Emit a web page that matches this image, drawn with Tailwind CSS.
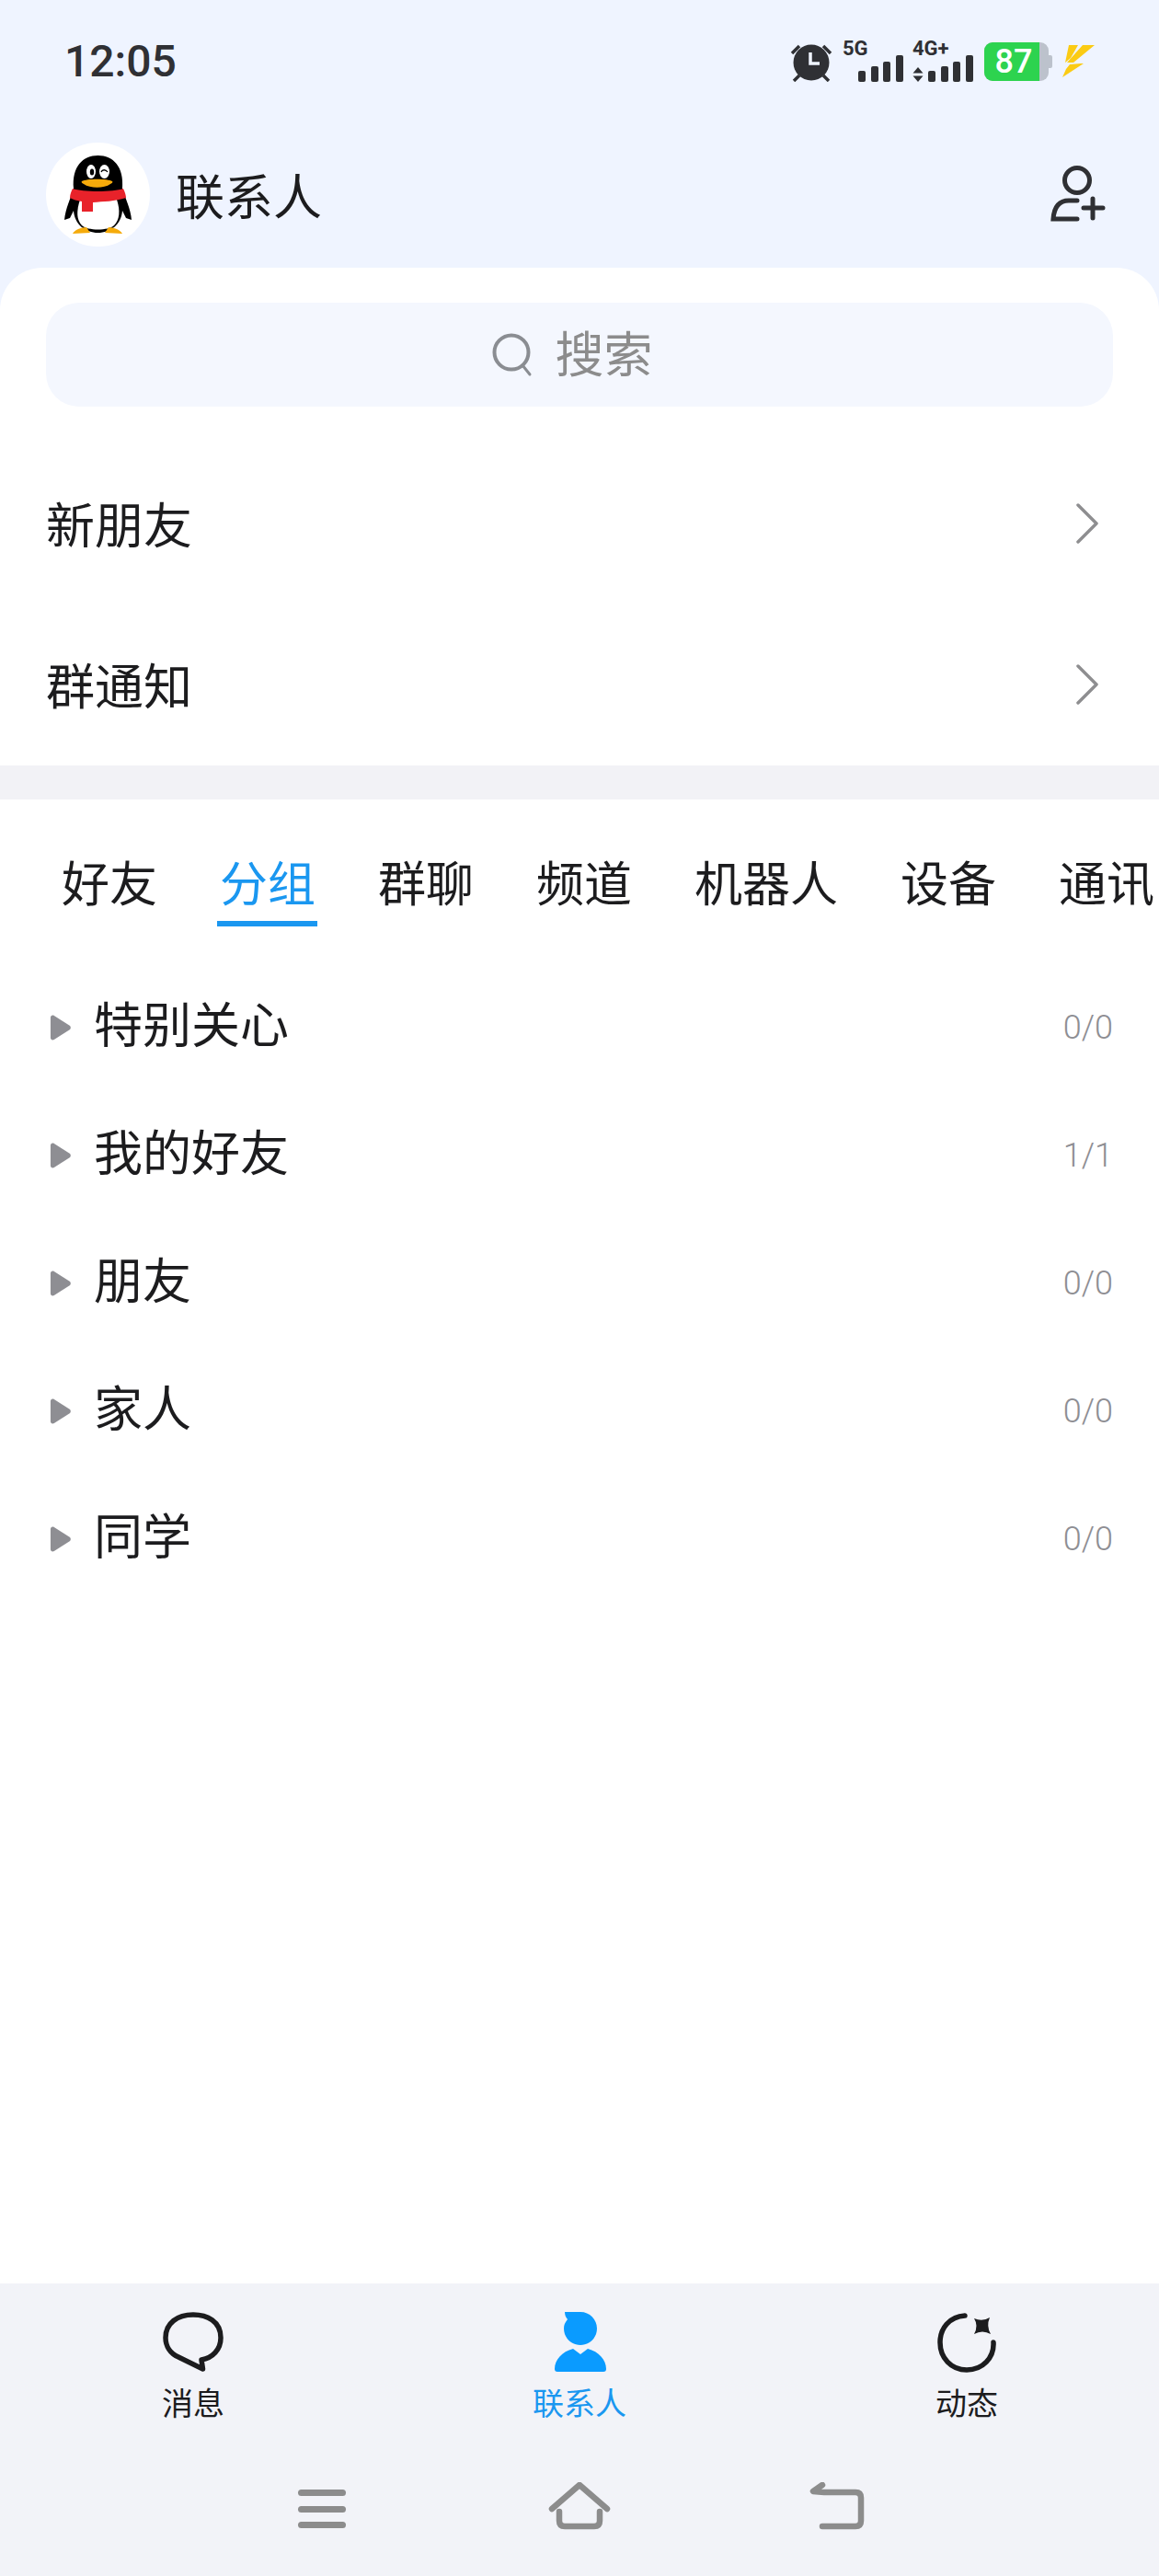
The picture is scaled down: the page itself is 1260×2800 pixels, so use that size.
<!DOCTYPE html>
<html lang="zh-CN">
  <head>
    <meta charset="UTF-8" />
    <meta name="viewport" content="width=device-width, initial-scale=1.0" />
    <title>联系人</title>
    <script src="https://cdn.jsdelivr.net/npm/@tailwindcss/browser@4"></script>
  </head>
  <body class="bg-white">
    <div class="w-[1260px] h-[2800px] overflow-hidden flex flex-col bg-[#eff4ff] text-[#1c1c1e] font-['Roboto','Noto_Sans_CJK_SC',sans-serif]">
      <!-- Status bar -->
      <div class="h-[136px] shrink-0 flex items-center justify-between pl-[70px] pr-[70px] pb-[2px]">
        <span class="text-[48px] leading-none font-medium text-[#2f3034]">12:05</span>
        <div class="flex items-center">
          <svg width="46" height="44" viewBox="0 0 46 44" fill="none">
            <circle cx="23" cy="23" r="19.5" fill="#2f3034" />
            <path d="M22 12v12h10" stroke="#eff4ff" stroke-width="3.5" />
            <path d="M2 13 10 5M44 13 36 5M4 43l6-6M42 43l-6-6" stroke="#2f3034" stroke-width="3.5" />
          </svg>
          <div class="relative w-[64px] h-[44px] ml-[11px]">
            <span class="absolute left-0 top-[-2px] text-[22px] leading-[20px] font-bold text-[#2f3034]">5G</span>
            <div class="absolute left-[17px] bottom-0 flex items-end gap-[5.5px]">
              <i class="block w-[8px] h-[12px] rounded-[2px] bg-[#2f3034]"></i>
              <i class="block w-[8px] h-[17px] rounded-[2px] bg-[#2f3034]"></i>
              <i class="block w-[8px] h-[22px] rounded-[2px] bg-[#2f3034]"></i>
              <i class="block w-[8px] h-[29px] rounded-[2px] bg-[#2f3034]"></i>
            </div>
          </div>
          <div class="relative w-[64px] h-[44px] ml-[12px]">
            <span class="absolute left-0 top-[-2px] text-[22px] leading-[20px] font-bold text-[#2f3034]">4G+</span>
            <svg class="absolute left-0 bottom-0" width="12" height="16" viewBox="0 0 12 16" fill="#2f3034">
              <path d="M6 0l5.500 6.500H.5zM6 16 .5 9.500h11z" />
            </svg>
            <div class="absolute left-[17px] bottom-0 flex items-end gap-[5.5px]">
              <i class="block w-[8px] h-[12px] rounded-[2px] bg-[#2f3034]"></i>
              <i class="block w-[8px] h-[17px] rounded-[2px] bg-[#2f3034]"></i>
              <i class="block w-[8px] h-[22px] rounded-[2px] bg-[#2f3034]"></i>
              <i class="block w-[8px] h-[29px] rounded-[2px] bg-[#2f3034]"></i>
            </div>
          </div>
          <div class="flex items-center ml-[14px]">
            <div class="flex h-[42px] w-[70px] rounded-[9px] overflow-hidden bg-[#bcc2cc]">
              <div class="w-[60px] bg-[#2dd34f] flex items-center justify-center text-white text-[36px] leading-none font-medium pl-[4px]">87</div>
            </div>
            <div class="w-[4px] h-[14px] rounded-r-[2px] bg-[#bcc2cc]"></div>
          </div>
          <svg class="ml-[11px]" width="35" height="36" viewBox="0 0 35 36" fill="#fbcb14">
            <path d="M7 0h10L9 14 3 19zM22 0h13L12 19H5zM20 20h3L0 35 4 26 8 21z" />
          </svg>
        </div>
      </div>

      <!-- Header -->
      <div class="h-[155px] shrink-0 flex items-start justify-between pl-[50px] pr-[58px]">
        <div class="flex items-center">
          <div class="w-[113px] h-[113px] rounded-full bg-white flex items-center justify-center mt-[19px]">
            <svg width="73" height="85" viewBox="0 0 73 85">
              <path d="M10 36C8 12 20 0 36.500 0S65 12 63 36C66 46 72 58 73 70L67 68 63 60C62 75 50 84 36.500 84 23 84 11 75 10 60L6 68 0 70C1 58 7 46 10 36z" fill="#000" />
              <path d="M17 48H57C61 60 60 70 54 76 48 82 25 82 19 76 13 70 13 60 17 48z" fill="#fff" />
              <ellipse cx="29" cy="17.500" rx="5" ry="7.500" fill="#fff" />
              <ellipse cx="43.500" cy="17.500" rx="5.500" ry="7.500" fill="#fff" />
              <ellipse cx="30" cy="18" rx="2.200" ry="3.500" fill="#000" />
              <path d="M40 18c1-3 5-3 7 0" stroke="#000" stroke-width="1.300" fill="none" />
              <path d="M19 28c5-3 28-3 33 0 1 1 0 2-2 3-7 5-22 5-29 0-2-1-3-2-2-3z" fill="#f5ab0b" />
              <path d="M9 36C20 40 53 40 64 36 66 40 67 44 67 46 55 50 42 50 31 51V61H19V50C14 49 9 48 6 46 6 42 8 38 9 36z" fill="#e8222a" />
              <path d="M9 85C11 81 18 78 24 78L28 84zM63 85C61 81 54 78 48 78L44 84z" fill="#f5ab0b" />
            </svg>
          </div>
          <span class="ml-[28px] mt-[29px] text-[53px] leading-none">联系人</span>
        </div>
        <svg class="mt-[44px]" width="60" height="64" viewBox="0 0 60 64" fill="none" stroke="#2f3034" stroke-width="5" stroke-linecap="round">
          <circle cx="29" cy="16" r="13.500" />
          <path d="M29 38H20C10 38 4 44 3 58H29" />
          <path d="M36 46H57M46 36V57" />
        </svg>
      </div>

      <!-- Main panel -->
      <div class="flex-1 min-h-0 bg-white rounded-t-[46px] flex flex-col">
        <div class="mx-[50px] mt-[38px] h-[113px] shrink-0 rounded-[36px] bg-[#f4f7fe] flex items-center justify-center pr-[16px]">
          <svg width="46" height="48" viewBox="0 0 46 48" fill="none" stroke="#8a8d92" stroke-linecap="round">
            <circle cx="21" cy="21" r="18.500" stroke-width="4" />
            <path d="M33 35l8 10" stroke-width="3" />
          </svg>
          <span class="ml-[23px] mt-[3px] text-[53px] leading-none text-[#8c8c8c]">搜索</span>
        </div>

        <!-- Shortcuts -->
        <div class="h-[175px] mt-[40px] shrink-0 flex items-center justify-between pl-[50px] pr-[66px]">
          <span class="mt-[7px] text-[53px] leading-none">新朋友</span>
          <svg class="mb-[2px]" width="24" height="44" viewBox="0 0 24 44" fill="none" stroke="#8e8e90" stroke-width="3.500" stroke-linecap="round" stroke-linejoin="round">
            <path d="M2 2l20 20L2 42" />
          </svg>
        </div>
        <div class="h-[175px] shrink-0 flex items-center justify-between pl-[50px] pr-[66px]">
          <span class="mt-[7px] text-[53px] leading-none">群通知</span>
          <svg class="mb-[2px]" width="24" height="44" viewBox="0 0 24 44" fill="none" stroke="#8e8e90" stroke-width="3.500" stroke-linecap="round" stroke-linejoin="round">
            <path d="M2 2l20 20L2 42" />
          </svg>
        </div>
        <div class="h-[37px] shrink-0 bg-[#f2f2f6]"></div>

        <!-- Tabs -->
        <div class="flex gap-[68px] pl-[67px] mt-[64px] pb-[14px] shrink-0 whitespace-nowrap text-[52px] leading-[60px]">
          <span>好友</span>
          <span class="relative text-[#1a97f0]">分组<i class="absolute left-[-3px] right-[-2px] top-[68px] h-[6px] bg-[#1a97f0]"></i></span>
          <span>群聊</span>
          <span>频道</span>
          <span>机器人</span>
          <span>设备</span>
          <span>通讯</span>
        </div>

        <!-- Groups -->
        <div class="mt-[40px] flex flex-col">
          <div class="h-[139px] flex items-center pl-[54px] pr-[50px]">
            <svg width="24" height="28" viewBox="0 0 25 28" preserveAspectRatio="none" fill="#8e8e93"><path d="M1 3c0-2 2-3 4-2l18 11c1 1 1 3 0 4L5 27c-2 1-4 0-4-2z" /></svg>
            <span class="ml-[24px] text-[53px] leading-none">特别关心</span>
            <span class="ml-auto text-[36px] leading-none font-light text-[#8e8e93]">0/0</span>
          </div>
          <div class="h-[139px] flex items-center pl-[54px] pr-[50px]">
            <svg width="24" height="28" viewBox="0 0 25 28" preserveAspectRatio="none" fill="#8e8e93"><path d="M1 3c0-2 2-3 4-2l18 11c1 1 1 3 0 4L5 27c-2 1-4 0-4-2z" /></svg>
            <span class="ml-[24px] text-[53px] leading-none">我的好友</span>
            <span class="ml-auto text-[36px] leading-none font-light text-[#8e8e93]">1/1</span>
          </div>
          <div class="h-[139px] flex items-center pl-[54px] pr-[50px]">
            <svg width="24" height="28" viewBox="0 0 25 28" preserveAspectRatio="none" fill="#8e8e93"><path d="M1 3c0-2 2-3 4-2l18 11c1 1 1 3 0 4L5 27c-2 1-4 0-4-2z" /></svg>
            <span class="ml-[24px] text-[53px] leading-none">朋友</span>
            <span class="ml-auto text-[36px] leading-none font-light text-[#8e8e93]">0/0</span>
          </div>
          <div class="h-[139px] flex items-center pl-[54px] pr-[50px]">
            <svg width="24" height="28" viewBox="0 0 25 28" preserveAspectRatio="none" fill="#8e8e93"><path d="M1 3c0-2 2-3 4-2l18 11c1 1 1 3 0 4L5 27c-2 1-4 0-4-2z" /></svg>
            <span class="ml-[24px] text-[53px] leading-none">家人</span>
            <span class="ml-auto text-[36px] leading-none font-light text-[#8e8e93]">0/0</span>
          </div>
          <div class="h-[139px] flex items-center pl-[54px] pr-[50px]">
            <svg width="24" height="28" viewBox="0 0 25 28" preserveAspectRatio="none" fill="#8e8e93"><path d="M1 3c0-2 2-3 4-2l18 11c1 1 1 3 0 4L5 27c-2 1-4 0-4-2z" /></svg>
            <span class="ml-[24px] text-[53px] leading-none">同学</span>
            <span class="ml-auto text-[36px] leading-none font-light text-[#8e8e93]">0/0</span>
          </div>
        </div>
      </div>

      <!-- Bottom tabs -->
      <div class="h-[318px] shrink-0 bg-[#f2f3f8] flex flex-col">
        <div class="relative h-[150px]">
          <div class="absolute left-[160px] top-[31px] w-[100px] flex flex-col items-center">
            <svg width="66" height="66" viewBox="0 0 66 66" fill="none" stroke="#1c1c1e" stroke-width="5.500" stroke-linejoin="round">
              <path d="M33 3C48 3 63 10 63 28 63 41 54 50 42 52L43.500 62 17 49C8 45 3 37 3 28 3 12 16 3 33 3z" />
            </svg>
            <span class="mt-[15px] text-[34px] leading-[38px]">消息</span>
          </div>
          <div class="absolute left-[570px] top-[31px] w-[120px] flex flex-col items-center">
            <svg width="66" height="66" viewBox="0 0 66 66" fill="#0a9bff">
              <path d="M17 0H34C44 0 52 8 52 18 52 28 44 36 34 36 24 36 16 28 16 18 16 14 17 12 20 8 18 6 17 3 17 0z" />
              <path d="M26 40 34 46 42 40C54 43 62 52 62 62 62 64 61 65 59 65H9C7 65 6 64 6 62 6 52 14 43 26 40z" />
            </svg>
            <span class="mt-[15px] text-[34px] leading-[38px] text-[#1a97f0]">联系人</span>
          </div>
          <div class="absolute left-[1001px] top-[31px] w-[100px] flex flex-col items-center">
            <svg width="66" height="66" viewBox="0 0 66 66" fill="none">
              <path d="M31 4C14 5 4 18 4 33 4 50 16 63 33 63 50 63 63 50 62 33" stroke="#1c1c1e" stroke-width="5.500" stroke-linecap="round" />
              <path d="M41 7Q50 11 58 6 54 15 59 24 50 19 41 24 46 15 41 7z" fill="#1c1c1e" />
            </svg>
            <span class="mt-[15px] text-[34px] leading-[38px]">动态</span>
          </div>
        </div>
        <!-- System nav -->
        <div class="relative flex-1">
          <div class="absolute left-[324px] top-[74px] w-[52px] h-[42px] flex flex-col justify-between">
            <i class="block h-[7px] rounded-full bg-[#8c8c8c]"></i>
            <i class="block h-[7px] rounded-full bg-[#8c8c8c]"></i>
            <i class="block h-[7px] rounded-full bg-[#8c8c8c]"></i>
          </div>
          <svg class="absolute left-[596px] top-[66px]" width="68" height="52" viewBox="0 0 68 52" fill="none" stroke="#8c8c8c" stroke-width="6.500" stroke-linecap="round" stroke-linejoin="round">
            <path d="M4 29 34 3 64 29" />
            <path d="M12 32V42C12 46 14 48 18 48H50C54 48 56 46 56 42V32" />
          </svg>
          <svg class="absolute left-[880px] top-[66px]" width="60" height="52" viewBox="0 0 60 52" fill="none" stroke="#8c8c8c" stroke-width="6.500" stroke-linecap="round" stroke-linejoin="round">
            <path d="M14 3 4 10 16 11H50C54 11 56 13 56 17V42C56 46 54 48 50 48H14" />
          </svg>
        </div>
      </div>
    </div>
  </body>
</html>
